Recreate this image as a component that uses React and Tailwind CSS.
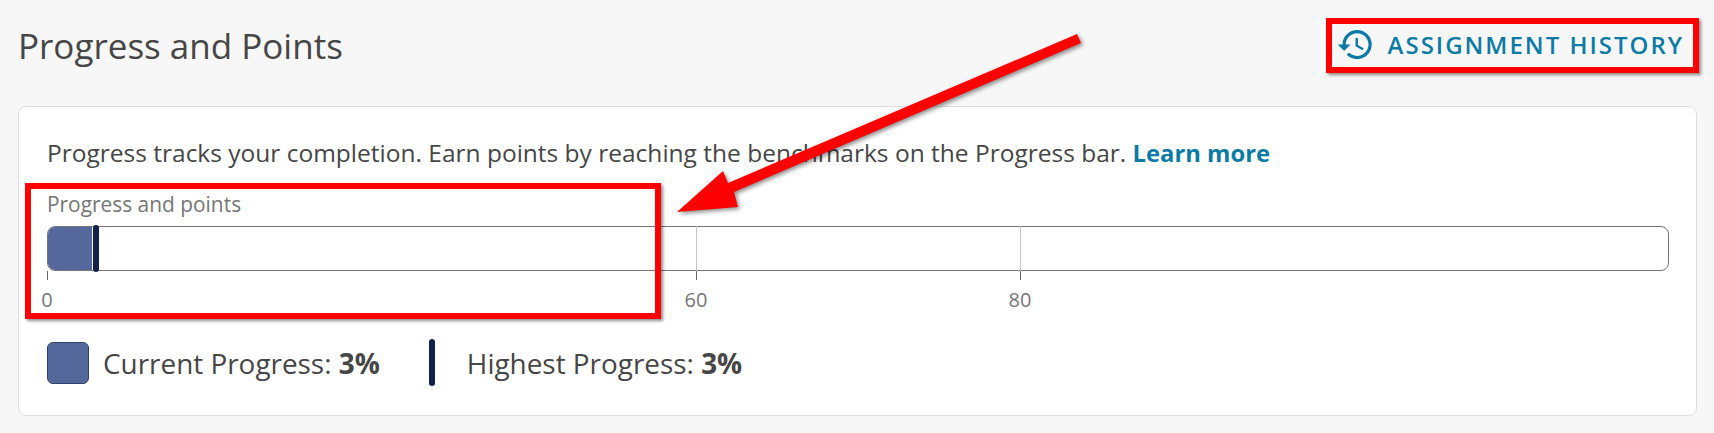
import React from 'react';
import { MdHistory } from 'react-icons/md';

const font = { fontFamily: '"Open Sans", sans-serif' };

function Tick({ left, label, line }) {
  return (
    <div className="absolute top-0 h-[70px] w-0" style={{ left }}>
      {line && <div className="absolute top-0 h-[45px] w-px bg-[#c4c4c4]" />}
      <div className="absolute top-[45px] h-[9px] w-px bg-[#666]" />
      <div className="absolute top-[61px] -translate-x-1/2 text-[20px] leading-[26px] text-[#767676]">{label}</div>
    </div>
  );
}

export default function App() {
  return (
    <div className="relative h-[433px] w-[1714px] overflow-hidden bg-[#f7f7f7] text-[#464646]" style={font}>
      <div className="flex h-[106px] items-start justify-between pl-[18px] pr-[30px]">
        <h1 className="mt-[22px] text-[35px] font-normal leading-[48px] text-[#464646]">Progress and Points</h1>
        <button className="mt-[25px] flex items-center gap-[13px] text-[#0b7ba5]">
          <MdHistory size={39} />
          <span className="text-[24px] font-semibold leading-[33px] tracking-[2px]">ASSIGNMENT HISTORY</span>
        </button>
      </div>

      <div className="mx-[18px] h-[310px] w-[1679px] rounded-[8px] border border-[#dedede] bg-white pl-[28px] pr-[28px]">
        <p className="mt-[29px] text-[24.5px] leading-[33px]">
          Progress tracks your completion. Earn points by reaching the benchmarks on the Progress bar.{' '}
          <a className="text-[23.8px] font-bold text-[#0b7ba5]">Learn more</a>
        </p>
        <div className="mt-[20px] text-[20.9px] leading-[28px] text-[#767676]">Progress and points</div>

        <div className="relative mt-[8px] h-[85px]">
          <div className="relative h-[45px] w-[1622px] overflow-hidden rounded-[8px] border border-[#767676]">
            <div className="h-full w-[44px] bg-[#54689c]" />
          </div>
          <div className="absolute left-[46px] top-[-1px] h-[47px] w-[6px] rounded-full bg-[#12214a]" />
          <Tick left={0} label="0" />
          <Tick left={649} label="60" line />
          <Tick left={973} label="80" line />
        </div>

        <div className="mt-[28px] flex items-center text-[27.9px] leading-[38px]">
          <div className="h-[42px] w-[42px] rounded-[6px] border border-[#33406b] bg-[#54689c]" />
          <div className="ml-[14px]">Current Progress: <b>3%</b></div>
          <div className="ml-[49px] h-[47px] w-[6px] rounded-full bg-[#12214a]" />
          <div className="ml-[32px]">Highest Progress: <b>3%</b></div>
        </div>
      </div>

      {/* screenshot annotations */}
      <div className="absolute left-[1326px] top-[18px] h-[55px] w-[373px] border-[6px] border-[#f00] shadow-[2px_2px_3px_rgba(0,0,0,0.45)]" />
      <div className="absolute left-[25px] top-[183px] h-[136px] w-[636px] border-[6px] border-[#f00] shadow-[2px_2px_3px_rgba(0,0,0,0.45)]" />
      <svg className="absolute left-0 top-0 drop-shadow-[2px_2px_2px_rgba(0,0,0,0.45)]" width="1714" height="433">
        <polygon points="1077,34 1081,43 734,192 738,207 677,212 723,171 728,183" fill="#f00" />
      </svg>
    </div>
  );
}
